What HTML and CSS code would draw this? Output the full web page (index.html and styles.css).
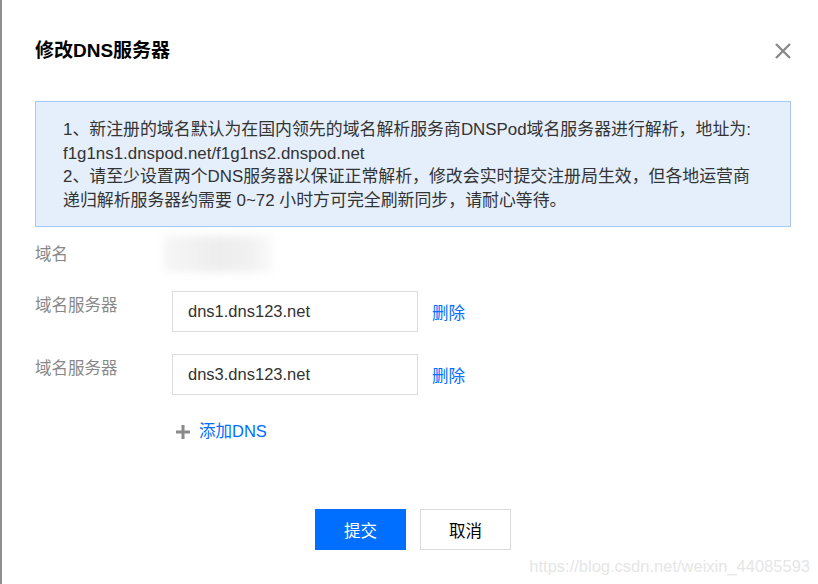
FILE: index.html
```html
<!DOCTYPE html>
<html lang="zh-CN">
<head>
<meta charset="utf-8">
<title>修改DNS服务器</title>
<link rel="stylesheet" href="styles.css">
</head>
<body>
<div class="page">
  <div class="dialog">
    <div class="header">
      <h1 class="title">修改DNS服务器</h1>
      <svg class="close" width="18" height="18" viewBox="0 0 18 18"><path d="M2 2 L16 16 M16 2 L2 16" stroke="#8a8a8a" stroke-width="2.4" fill="none"/></svg>
    </div>
    <div class="notice">
      <p>1、新注册的域名默认为在国内领先的域名解析服务商DNSPod域名服务器进行解析，地址为:</p>
      <p>f1g1ns1.dnspod.net/f1g1ns2.dnspod.net</p>
      <p>2、请至少设置两个DNS服务器以保证正常解析，修改会实时提交注册局生效，但各地运营商</p>
      <p>递归解析服务器约需要 0~72 小时方可完全刷新同步，请耐心等待。</p>
    </div>
    <div class="form">
      <div class="row">
        <div class="label">域名</div>
        <div class="value"><div class="blurred"></div></div>
      </div>
      <div class="row">
        <div class="label">域名服务器</div>
        <div class="value">
          <div class="input">dns1.dns123.net</div>
          <a class="link">删除</a>
        </div>
      </div>
      <div class="row">
        <div class="label">域名服务器</div>
        <div class="value">
          <div class="input">dns3.dns123.net</div>
          <a class="link">删除</a>
        </div>
      </div>
      <div class="row add-row">
        <div class="label"></div>
        <div class="value">
          <svg class="plus" width="14" height="14" viewBox="0 0 14 14"><path d="M0 7 H14 M7 0 V14" stroke="#8a8a8a" stroke-width="3" fill="none"/></svg>
          <a class="link add">添加DNS</a>
        </div>
      </div>
    </div>
    <div class="footer">
      <button class="btn primary">提交</button>
      <button class="btn">取消</button>
    </div>
  </div>
  <div class="watermark">https://blog.csdn.net/weixin_44085593</div>
</div>
</body>
</html>
```
FILE: styles.css
```css
html, body {
  margin: 0;
  padding: 0;
  background: #fff;
}
body {
  font-family: "Liberation Sans", Arial, "Noto Sans CJK SC", sans-serif;
  font-size: 16.5px;
  color: #333;
}
.page {
  position: relative;
  width: 816px;
  height: 584px;
  border-left: 2px solid #8f8f8f;
  overflow: hidden;
}
.dialog {
  padding: 0 27px 0 33px;
}
.header {
  height: 101px;
  display: flex;
  align-items: center;
  justify-content: space-between;
}
.title {
  margin: 0;
  font-size: 19px;
  font-weight: bold;
  color: #000;
  line-height: 24px;
}
.close {
  display: block;
  margin-right: -1px;
}
.notice {
  box-sizing: border-box;
  height: 126px;
  background: #e5effc;
  border: 1px solid #a6c9f5;
  padding: 16px 20px 0 27px;
  color: #333;
  font-size: 16.9px;
  overflow: hidden;
}
.notice p {
  margin: 0;
  height: 23.5px;
  line-height: 23.5px;
  white-space: nowrap;
}
.form {
  margin-top: 13px;
  display: flex;
  flex-direction: column;
  gap: 22px;
}
.row {
  display: flex;
  align-items: flex-start;
}
.label {
  width: 137px;
  flex: none;
  line-height: 29px;
  height: 29px;
  color: #888;
}
.value {
  display: flex;
  align-items: center;
}
.blurred {
  width: 110px;
  height: 36px;
  margin-left: -8px;
  margin-top: -4px;
  margin-bottom: -3px;
  background: linear-gradient(90deg, #f6f6f6, #ededed 50%, #f1f1f1 80%, #fcfcfc);
  filter: blur(4px);
}
.input {
  width: 229px;
  height: 39px;
  border: 1px solid #dcdcdc;
  padding-left: 15px;
  line-height: 39px;
  color: #333;
  font-family: "Liberation Sans", Arial, sans-serif;
}
.link {
  color: #006eff;
  margin-left: 14px;
  cursor: pointer;
}
.add-row .value {
  height: 29px;
}
.plus {
  display: block;
  margin-left: 4px;
}
.link.add {
  margin-left: 9px;
  line-height: 29px;
}
.footer {
  margin-top: 63px;
  display: flex;
  justify-content: center;
  gap: 14px;
}
.btn {
  width: 91px;
  height: 41px;
  border: 1px solid #d9d9d9;
  background: #fff;
  color: #000;
  font-family: "Liberation Sans", Arial, "Noto Sans CJK SC", sans-serif;
  font-size: 16.5px;
  padding: 0;
}
.btn.primary {
  background: #006eff;
  border-color: #006eff;
  color: #fff;
}
.watermark {
  position: absolute;
  right: 8px;
  bottom: 8px;
  font-family: "Liberation Sans", Arial, sans-serif;
  font-size: 16.5px;
  color: #e6e6e6;
}
```
